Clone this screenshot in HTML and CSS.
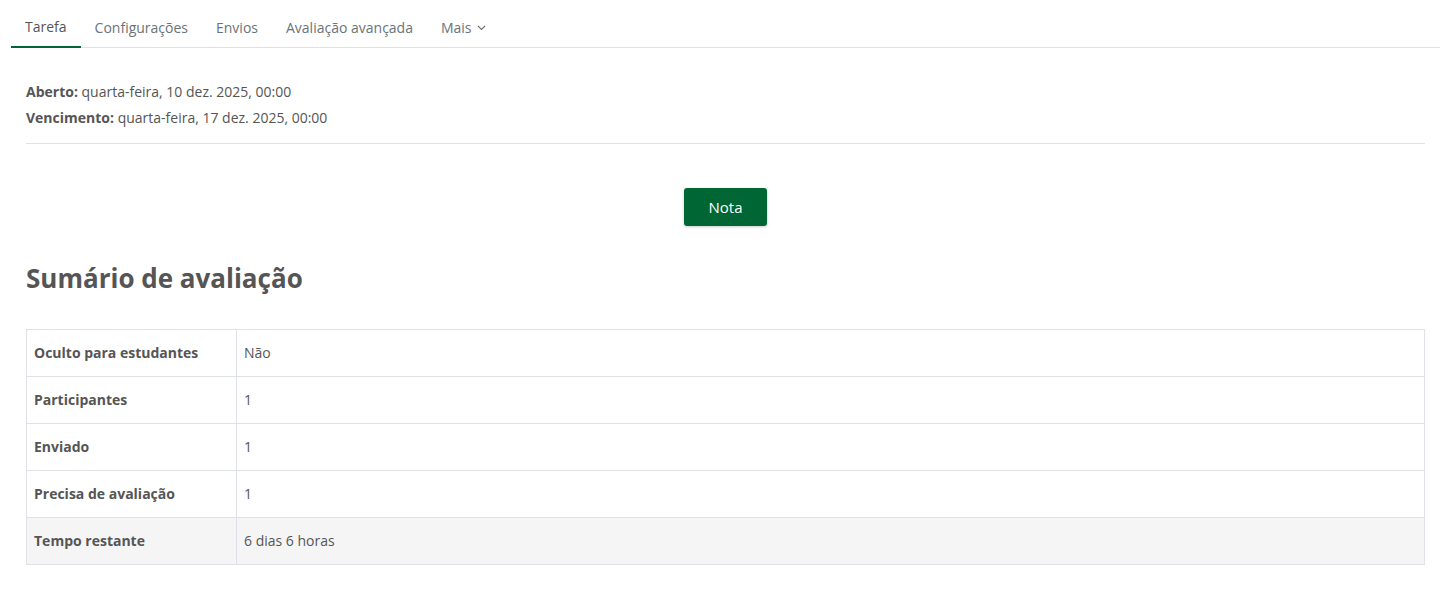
FILE: index.html
```html
<!DOCTYPE html>
<html lang="pt">
<head>
<meta charset="utf-8">
<link rel="stylesheet" href="styles.css">
</head>
<body>
<nav class="tabs">
  <a class="tab active">Tarefa</a>
  <a class="tab">Configurações</a>
  <a class="tab">Envios</a>
  <a class="tab">Avaliação avançada</a>
  <a class="tab">Mais <svg class="chev" width="9" height="6" viewBox="0 0 9 6"><path d="M1 1l3.5 3.5L8 1" fill="none" stroke="currentColor" stroke-width="1.1"/></svg></a>
</nav>
<main class="content">
  <div class="dates">
    <div><strong>Aberto:</strong> quarta-feira, 10 dez. 2025, 00:00</div>
    <div><strong>Vencimento:</strong> quarta-feira, 17 dez. 2025, 00:00</div>
  </div>
  <div class="actions"><button class="btn">Nota</button></div>
  <h2 class="title">Sumário de avaliação</h2>
  <table class="summary">
    <tr><th>Oculto para estudantes</th><td>Não</td></tr>
    <tr><th>Participantes</th><td>1</td></tr>
    <tr><th>Enviado</th><td>1</td></tr>
    <tr><th>Precisa de avaliação</th><td>1</td></tr>
    <tr class="shade"><th>Tempo restante</th><td>6 dias 6 horas</td></tr>
  </table>
</main>
</body>
</html>
```
FILE: styles.css
```css
html, body { margin: 0; padding: 0; background: #fff; }
body {
  font-family: "Open Sans", "Liberation Sans", sans-serif;
  color: #555;
  font-size: 14px;
}
.tabs {
  display: flex;
  margin: 0 7px 0 11px;
  border-bottom: 1px solid #dee2e6;
  height: 48px;
  box-sizing: border-box;
}
.tab {
  display: flex;
  align-items: center;
  gap: 5px;
  padding: 7px 14px 0;
  font-size: 14px;
  color: #6a737b;
  height: 48px;
  box-sizing: border-box;
  margin-bottom: -1px;
}
.tab.active {
  color: #555;
  border-bottom: 2px solid #006633;
}
.chev { margin-top: 1px; }
.content { padding: 0 22px 0 26px; }
.dates {
  padding: 31px 0 12px;
  border-bottom: 1px solid #dee2e6;
  line-height: 26px;
}
.dates strong { font-weight: 700; }
.actions {
  display: flex;
  justify-content: center;
  padding-top: 44px;
}
.btn {
  font-family: inherit;
  font-size: 15px;
  color: #fff;
  background: #006633;
  border: 0;
  border-radius: 3px;
  width: 83px;
  height: 38px;
  box-shadow: 0 1px 3px rgba(0,0,0,0.2);
}
.title {
  font-size: 26px;
  font-weight: 700;
  margin: 37px 0 0;
  line-height: 30px;
  color: #555;
}
.summary {
  margin-top: 36px;
  width: 100%;
  border-collapse: collapse;
  border: 1px solid #dee2e6;
}
.summary th, .summary td {
  border: 1px solid #dee2e6;
  text-align: left;
  padding: 0 7px 2px;
  height: 44px;
  font-size: 14px;
}
.summary th { width: 195px; font-weight: 700; }
.summary .shade th, .summary .shade td { background: #f5f5f5; }
```
